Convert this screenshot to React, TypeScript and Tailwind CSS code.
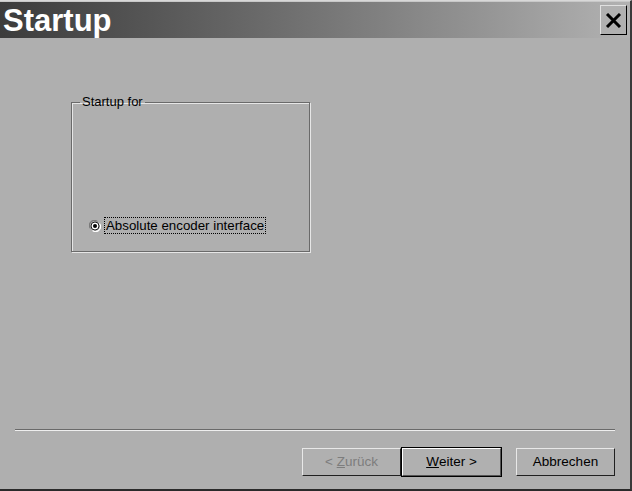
import React from "react";

const font = { fontFamily: '"Liberation Sans", Arial, sans-serif' };

function RadioDot() {
  return (
    <svg width="12" height="12" viewBox="0 0 12 12" className="shrink-0">
      <path d="M1.5 8.5 A5 5 0 0 1 8.5 1.5" fill="none" stroke="#7a7a7a" strokeWidth="1.2" />
      <path d="M3.5 10.5 A5 5 0 0 0 10.5 3.5" fill="none" stroke="#ffffff" strokeWidth="1.2" />
      <circle cx="6" cy="6" r="4" fill="#ffffff" stroke="#202020" strokeWidth="1" />
      <circle cx="6" cy="6" r="2" fill="#000000" />
    </svg>
  );
}

function DialogButton({
  label,
  underline,
  rest,
  disabled,
  isDefault,
}: {
  label?: string;
  underline: string;
  rest: string;
  disabled?: boolean;
  isDefault?: boolean;
}) {
  return (
    <button
      className={`flex h-[28px] w-[99px] items-center justify-center bg-[#b0b0b0] text-[13.5px] ${
        isDefault
          ? "outline outline-1 outline-black border border-t-white border-l-white border-r-[#555] border-b-[#555]"
          : "border border-t-[#e8e8e8] border-l-[#e8e8e8] border-r-[#202020] border-b-[#202020]"
      } ${disabled ? "text-[#7d7d7d]" : "text-black"}`}
      style={font}
    >
      {label}
      <span className="underline">{underline}</span>
      {rest}
    </button>
  );
}

export default function App() {
  return (
    <div
      className="flex h-[491px] w-[632px] flex-col bg-[#afafaf] border-t border-t-[#d8d8d8] border-r-2 border-r-[#3a3a3a] border-b-2 border-b-[#2a2a2a]"
      style={font}
    >
      {/* Title bar */}
      <div className="flex h-[37px] items-center justify-between bg-gradient-to-r from-[#3c3c3c] via-[#747474] to-[#b2b2b2] pl-[3px] pr-[3px] border-t border-t-[#c8c8c8]">
        <span className="text-[31px] font-bold leading-none text-white" style={font}>
          Startup
        </span>
        <div className="flex h-[30px] w-[27px] items-center justify-center bg-[#b0b0b0] border border-t-[#e0e0e0] border-l-[#e0e0e0] border-r-black border-b-black">
          <svg width="17" height="15" viewBox="0 0 17 15">
            <path d="M2 1 L15 14 M15 1 L2 14" stroke="#000" strokeWidth="3" />
          </svg>
        </div>
      </div>

      {/* Body */}
      <div className="flex flex-1 flex-col">
        <div className="flex-1 pl-[71px] pt-[57px]">
          <fieldset className="relative h-[157px] w-[239px] border border-[#6a6a6a] shadow-[1px_1px_0_#e6e6e6,inset_1px_1px_0_#e6e6e6]">
            <legend className="ml-[8px] px-[2px] text-[13px] leading-[14px] text-black" style={font}>
              Startup for
            </legend>
            <div className="mt-[108px] flex items-center gap-[3px] pl-[17px]">
              <RadioDot />
              <span
                className="border border-dotted border-black px-[1px] text-[13.3px] leading-[15px] text-black"
                style={font}
              >
                Absolute encoder interface
              </span>
            </div>
          </fieldset>
        </div>

        {/* Separator */}
        <div className="mx-[15px] h-[2px] border-t border-t-[#6a6a6a] border-b border-b-[#eeeeee]" />

        {/* Buttons */}
        <div className="flex items-center justify-end pr-[15px] pt-[17px] pb-[13px]">
          <DialogButton label={"<\u00a0"} underline="Z" rest="urück" disabled />
          <div className="ml-[1px]">
            <DialogButton underline="W" rest="eiter >" isDefault />
          </div>
          <div className="ml-[15px]">
            <DialogButton underline="" rest="Abbrechen" />
          </div>
        </div>
      </div>
    </div>
  );
}
